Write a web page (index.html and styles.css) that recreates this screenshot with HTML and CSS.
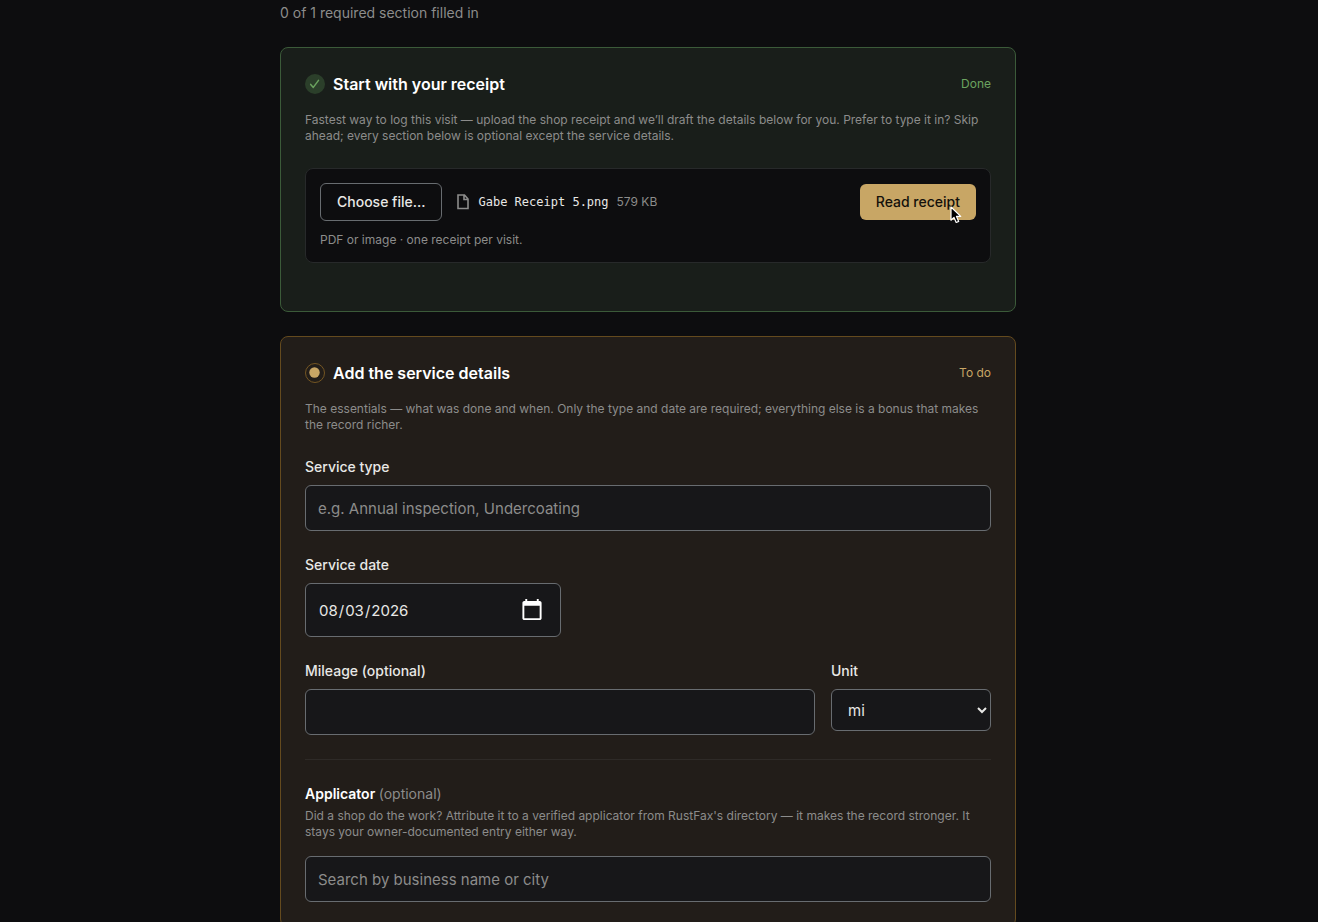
FILE: index.html
```html
<!DOCTYPE html>
<html lang="en">
<head>
    <meta charset="UTF-8">
    <meta name="viewport" content="width=device-width, initial-scale=1.0">
    <title>Log a service visit</title>
    <link rel="stylesheet" href="styles.css">
</head>
<body>
    <main class="page">
        <p class="progress">0 of 1 required section filled in</p>

        <section class="card card-done">
            <header class="card-header">
                <svg class="status-icon" viewBox="0 0 20 20" aria-hidden="true">
                    <circle cx="10" cy="10" r="10" fill="#2b3f2a"/>
                    <path d="M5.7 10.4l2.6 3 5.2-7" fill="none" stroke="#6ba35f" stroke-width="1.5" stroke-linecap="round" stroke-linejoin="round"/>
                </svg>
                <h2>Start with your receipt</h2>
                <span class="status">Done</span>
            </header>
            <p class="hint">Fastest way to log this visit — upload the shop receipt and we’ll draft the details below for you. Prefer to type it in? Skip ahead; every section below is optional except the service details.</p>

            <div class="upload">
                <div class="upload-row">
                    <button type="button" class="btn btn-outline">Choose file…</button>
                    <div class="file">
                        <svg class="file-icon" viewBox="0 0 14 16" aria-hidden="true">
                            <path d="M2 1h6.5L12 5v9.5H2zM8 1v4.5h4" fill="none" stroke="#8c8c8b" stroke-width="1.6"/>
                        </svg>
                        <span class="file-name">Gabe Receipt 5.png</span>
                        <span class="file-size">579 KB</span>
                    </div>
                    <button type="button" class="btn btn-primary">
                        Read receipt
                        <svg class="cursor" viewBox="0 0 12 18" aria-hidden="true">
                            <path d="M1 1v13.2l3-2.8 2.2 5.1 2.5-1.1-2.2-5h4.2z" fill="#000" stroke="#fff" stroke-width="1.2" stroke-linejoin="round"/>
                        </svg>
                    </button>
                </div>
                <p class="upload-note">PDF or image · one receipt per visit.</p>
            </div>
        </section>

        <section class="card card-todo">
            <header class="card-header">
                <svg class="status-icon" viewBox="0 0 20 20" aria-hidden="true">
                    <circle cx="10" cy="10" r="9.5" fill="none" stroke="#745623"/>
                    <circle cx="9.5" cy="9.5" r="5.2" fill="#c8a665"/>
                </svg>
                <h2>Add the service details</h2>
                <span class="status">To do</span>
            </header>
            <p class="hint">The essentials — what was done and when. Only the type and date are required; everything else is a bonus that makes the record richer.</p>

            <form class="form">
                <div class="field">
                    <label for="service-type">Service type</label>
                    <input type="text" id="service-type" placeholder="e.g. Annual inspection, Undercoating">
                </div>
                <div class="field">
                    <label for="service-date">Service date</label>
                    <input type="date" id="service-date" value="2026-08-03">
                </div>
                <div class="field-row">
                    <div class="field">
                        <label for="mileage">Mileage (optional)</label>
                        <input type="text" id="mileage" inputmode="numeric">
                    </div>
                    <div class="field field-unit">
                        <label for="unit">Unit</label>
                        <select id="unit">
                            <option>mi</option>
                            <option>km</option>
                        </select>
                    </div>
                </div>

                <div class="applicator">
                    <label for="applicator">Applicator <span class="optional">(optional)</span></label>
                    <p class="hint">Did a shop do the work? Attribute it to a verified applicator from RustFax's directory — it makes the record stronger. It stays your owner-documented entry either way.</p>
                    <input type="text" id="applicator" placeholder="Search by business name or city">
                </div>
            </form>
        </section>
    </main>
</body>
</html>
```

FILE: styles.css
```css
:root {
    --bg: #0d0d0f;
    --field: #171719;
    --field-border: #686c70;
    --text: #e8e8e6;
    --muted: #8c8c8b;
    --green: #6ba35f;
    --gold: #c8a665;
    color-scheme: dark;
}

* {
    box-sizing: border-box;
    margin: 0;
    padding: 0;
}

body {
    background: var(--bg);
    color: var(--text);
    font-family: Inter, "Liberation Sans", sans-serif;
    font-size: 14px;
    line-height: 20px;
    padding: 3px 22px 24px 0;
}

.page {
    max-width: 736px;
    margin: 0 auto;
    display: flex;
    flex-direction: column;
    gap: 24px;
}

.progress {
    color: var(--muted);
}

.card {
    border: 1px solid;
    border-radius: 8px;
    padding: 24px;
}

.card-done {
    background: #191e1a;
    border-color: #3b5a39;
    padding-bottom: 48px;
}

.card-todo {
    background: #221d19;
    border-color: #644a1e;
}

.card-header {
    display: flex;
    align-items: center;
    gap: 8px;
    margin-bottom: 16px;
}

.status-icon {
    width: 20px;
    height: 20px;
}

h2 {
    color: #fff;
    font-size: 16px;
    font-weight: 600;
    line-height: 24px;
}

.status {
    margin-left: auto;
    font-size: 12px;
    line-height: 16px;
}

.card-done .status {
    color: var(--green);
}

.card-todo .status {
    color: var(--gold);
}

.hint {
    color: var(--muted);
    font-size: 12px;
    line-height: 16px;
}

/* Receipt upload */
.upload {
    margin-top: 24px;
    padding: 14px;
    background: var(--bg);
    border: 1px solid #27292a;
    border-radius: 8px;
}

.upload-row {
    display: flex;
    align-items: center;
    gap: 14px;
    margin-bottom: 11px;
}

.btn {
    position: relative;
    font: inherit;
    font-weight: 500;
    padding: 8px 16px;
    border: 0;
    border-radius: 6px;
    cursor: pointer;
}

.btn-outline {
    background: transparent;
    border: 1px solid var(--field-border);
    color: var(--text);
}

.btn-primary {
    margin-left: auto;
    background: var(--gold);
    color: #14110b;
}

.cursor {
    position: absolute;
    right: 14px;
    bottom: -4px;
    width: 12px;
    height: 18px;
}

.file {
    display: flex;
    align-items: center;
    gap: 8px;
}

.file-icon {
    width: 14px;
    height: 16px;
}

.file-name {
    font-family: "DejaVu Sans Mono", monospace;
    font-size: 12px;
}

.file-size,
.upload-note {
    color: var(--muted);
    font-size: 12px;
    line-height: 16px;
}

/* Service form */
.form {
    display: flex;
    flex-direction: column;
    gap: 24px;
    margin-top: 24px;
}

.field {
    flex: 1;
    display: flex;
    flex-direction: column;
    align-items: flex-start;
    gap: 8px;
}

.field-row {
    display: flex;
    gap: 16px;
}

.field-unit {
    flex: 0 0 160px;
}

label {
    font-weight: 500;
}

input,
select {
    width: 100%;
    height: 46px;
    padding: 0 12px;
    background: var(--field);
    border: 1px solid var(--field-border);
    border-radius: 6px;
    color: var(--text);
    font-family: inherit;
    font-size: 15px;
}

input::placeholder {
    color: var(--muted);
}

input[type="date"] {
    width: 256px;
    height: 54px;
    padding-right: 14px;
}

input[type="date"]::-webkit-calendar-picker-indicator {
    width: 24px;
    height: 24px;
}

select {
    height: 42px;
    padding: 0 0 0 12px;
}

.applicator {
    border-top: 1px solid #2e2a27;
    padding-top: 24px;
}

.applicator label {
    color: #fff;
    font-weight: 600;
}

.applicator .optional {
    color: var(--muted);
    font-weight: 400;
}

.applicator .hint {
    margin: 4px 0 16px;
}
```
